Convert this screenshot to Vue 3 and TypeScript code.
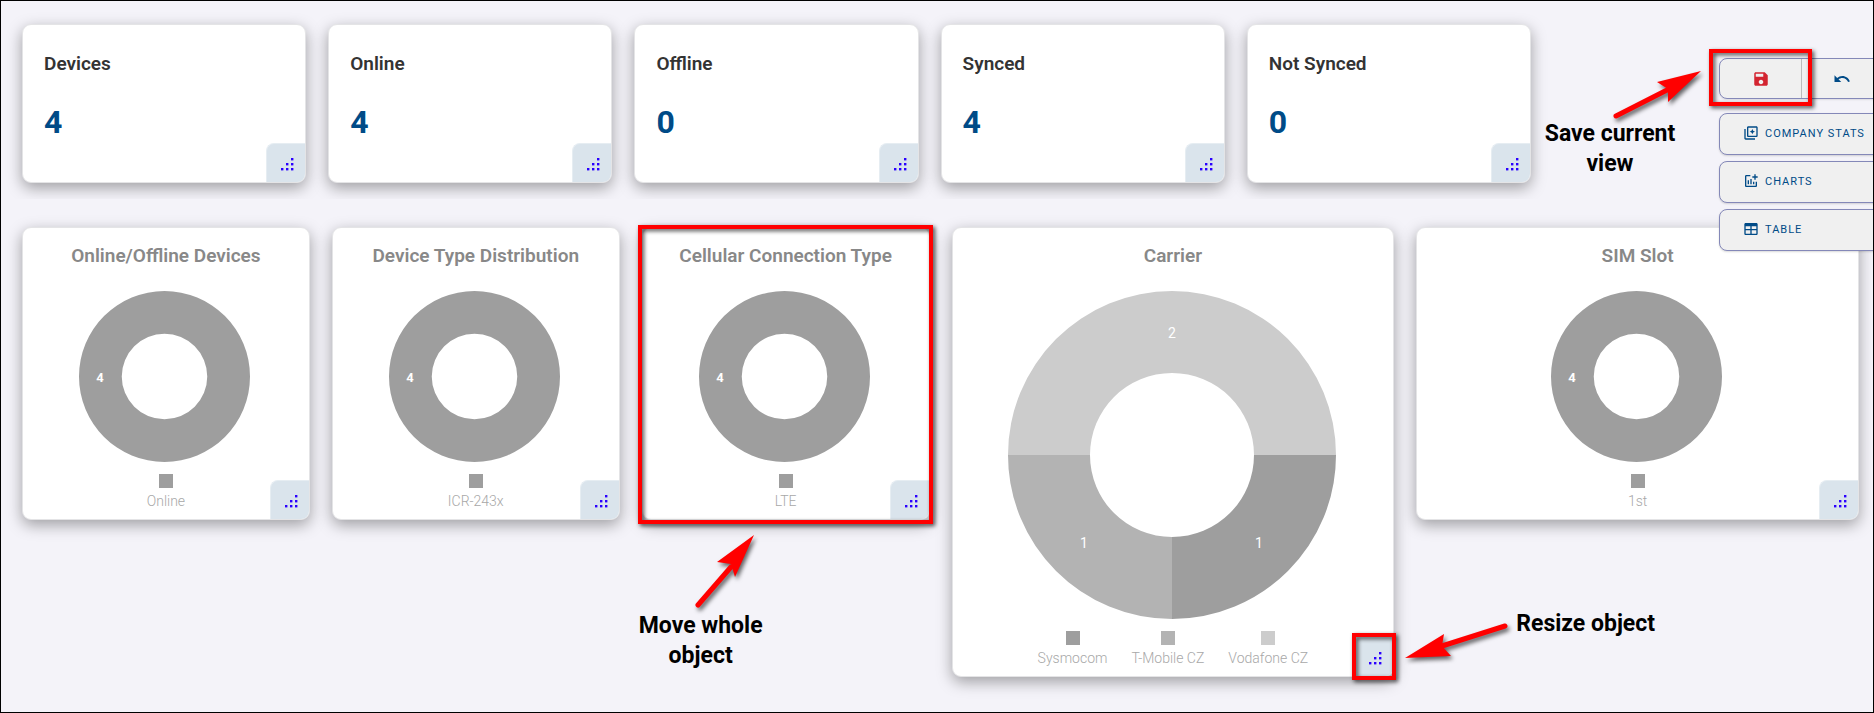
<script setup lang="ts">
interface Stat { label: string; value: number }
interface Slice { name: string; color: string; path: string }
interface SliceLabel { text: string; x: number; y: number }
interface Chart {
  title: string
  size: number
  slices: Slice[]
  labels: SliceLabel[]
  large?: boolean
  move?: boolean
}

const stats: Stat[] = [
  { label: 'Devices', value: 4 },
  { label: 'Online', value: 4 },
  { label: 'Offline', value: 0 },
  { label: 'Synced', value: 4 },
  { label: 'Not Synced', value: 0 },
]

// Ring segment between two angles in degrees, clockwise from three o'clock.
function ring(size: number, from: number, to: number): string {
  const c = size / 2
  const outer = c
  const inner = c / 2
  const at = (r: number, deg: number) => {
    const a = (deg * Math.PI) / 180
    return `${c + r * Math.cos(a)} ${c + r * Math.sin(a)}`
  }
  const mid = (from + to) / 2
  return [
    `M${at(outer, from)}`,
    `A${outer} ${outer} 0 0 1 ${at(outer, mid)}`,
    `A${outer} ${outer} 0 0 1 ${at(outer, to)}`,
    `L${at(inner, to)}`,
    `A${inner} ${inner} 0 0 0 ${at(inner, mid)}`,
    `A${inner} ${inner} 0 0 0 ${at(inner, from)}Z`,
  ].join('')
}

function single(title: string, name: string, move = false): Chart {
  return {
    title,
    size: 171,
    slices: [{ name, color: '#9e9e9e', path: ring(171, 0, 360) }],
    labels: [{ text: '4', x: 21, y: 91 }],
    move,
  }
}

const charts: Chart[] = [
  single('Online/Offline Devices', 'Online'),
  single('Device Type Distribution', 'ICR-243x'),
  single('Cellular Connection Type', 'LTE', true),
  {
    title: 'Carrier',
    size: 328,
    large: true,
    slices: [
      { name: 'Sysmocom', color: '#9e9e9e', path: ring(328, 0, 90) },
      { name: 'T-Mobile CZ', color: '#b3b3b3', path: ring(328, 90, 180) },
      { name: 'Vodafone CZ', color: '#cccccc', path: ring(328, 180, 360) },
    ],
    labels: [
      { text: '2', x: 164, y: 47 },
      { text: '1', x: 76, y: 257 },
      { text: '1', x: 251, y: 257 },
    ],
  },
  single('SIM Slot', '1st'),
]

const dots = [[10, 0], [5, 5], [10, 5], [0, 10], [5, 10], [10, 10]]
</script>

<template>
  <main class="page">
    <section class="stats">
      <article v-for="s in stats" :key="s.label" class="card stat">
        <h2 class="stat-label">{{ s.label }}</h2>
        <p class="stat-value">{{ s.value }}</p>
        <button class="handle" type="button" aria-label="Resize">
          <svg width="13" height="13" viewBox="0 0 13 13" aria-hidden="true">
            <rect v-for="([x, y], i) in dots" :key="i" :x="x" :y="y" width="2.400" height="2.400" />
          </svg>
        </button>
      </article>
    </section>

    <section class="charts">
      <article v-for="c in charts" :key="c.title" class="card chart" :class="{ large: c.large }">
        <h2 class="chart-title">{{ c.title }}</h2>
        <svg class="donut" :width="c.size" :height="c.size" :viewBox="`0 0 ${c.size} ${c.size}`">
          <path v-for="s in c.slices" :key="s.name" :d="s.path" :fill="s.color" />
          <text v-for="(l, i) in c.labels" :key="i" :x="l.x" :y="l.y" class="slice-label">{{ l.text }}</text>
        </svg>
        <ul class="legend">
          <li v-for="s in c.slices" :key="s.name">
            <span class="swatch" :style="{ background: s.color }"></span>{{ s.name }}
          </li>
        </ul>
        <button class="handle" type="button" aria-label="Resize">
          <svg width="13" height="13" viewBox="0 0 13 13" aria-hidden="true">
            <rect v-for="([x, y], i) in dots" :key="i" :x="x" :y="y" width="2.400" height="2.400" />
          </svg>
        </button>

        <template v-if="c.move">
          <span class="frame frame-move"></span>
          <div class="note note-move">
            <svg class="arrow" width="70" height="84" viewBox="0 0 70 84" aria-hidden="true">
              <path class="shaft" d="M5 78 38 40" />
              <path d="M61 8 24 35 38 37 42 50Z" />
            </svg>
            <p>Move whole<br />object</p>
          </div>
        </template>
        <template v-if="c.large">
          <span class="frame frame-resize"></span>
          <div class="note note-resize">
            <svg class="arrow" width="112" height="44" viewBox="0 0 112 44" aria-hidden="true">
              <path class="shaft" d="M105 7 42 27" />
              <path d="M5 39 44 15 42 27 51 37Z" />
            </svg>
            <p>Resize object</p>
          </div>
        </template>
      </article>
    </section>

    <aside class="tools">
      <div class="split">
        <button type="button" class="save" aria-label="Save">
          <svg width="18" height="18" viewBox="0 0 24 24" aria-hidden="true">
            <path d="M17 3H5c-1.11 0-2 .9-2 2v14c0 1.1.89 2 2 2h14c1.1 0 2-.9 2-2V7l-4-4zm-5 16c-1.66 0-3-1.34-3-3s1.34-3 3-3 3 1.34 3 3-1.34 3-3 3zm3-10H5V5h10v4z" />
          </svg>
        </button>
        <button type="button" class="undo" aria-label="Undo">
          <svg width="18" height="18" viewBox="0 0 24 24" aria-hidden="true">
            <path d="M12.5 8c-2.65 0-5.05.99-6.9 2.6L2 7v9h9l-3.62-3.62c1.39-1.16 3.16-1.88 5.12-1.88 3.54 0 6.55 2.31 7.6 5.5l2.37-.78C21.08 11.03 17.15 8 12.5 8z" />
          </svg>
        </button>
      </div>
      <button type="button" class="tool">
        <svg width="16" height="16" viewBox="0 0 24 24" aria-hidden="true">
          <path d="M4 6H2v14c0 1.1.9 2 2 2h14v-2H4V6zm16-4H8c-1.1 0-2 .9-2 2v12c0 1.1.9 2 2 2h12c1.1 0 2-.9 2-2V4c0-1.1-.9-2-2-2zm0 14H8V4h12v12zM14 6l1.200 2.800L18 10l-2.800 1.200L14 14l-1.200-2.800L10 10l2.800-1.200z" />
        </svg>
        COMPANY STATS
      </button>
      <button type="button" class="tool">
        <svg width="16" height="16" viewBox="0 0 24 24" aria-hidden="true">
          <path d="M22 5v2h-3v3h-2V7h-3V5h3V2h2v3h3zm-3 14H5V5h6V3H5c-1.1 0-2 .9-2 2v14c0 1.1.9 2 2 2h14c1.1 0 2-.9 2-2v-6h-2v6zm-4-6v4h2v-4h-2zm-4 4h2V9h-2v8zm-2 0v-6H7v6h2z" />
        </svg>
        CHARTS
      </button>
      <button type="button" class="tool">
        <svg width="16" height="16" viewBox="0 0 24 24" aria-hidden="true">
          <path d="M4 3h16c1.1 0 2 .9 2 2v14c0 1.1-.9 2-2 2H4c-1.1 0-2-.9-2-2V5c0-1.1.9-2 2-2zm0 5v4h7V8H4zm9 0v4h7V8h-7zm-9 6v5h7v-5H4zm9 0v5h7v-5h-7z" />
        </svg>
        TABLE
      </button>
      <span class="frame frame-save"></span>
      <div class="note note-save">
        <svg class="arrow" width="96" height="54" viewBox="0 0 96 54" aria-hidden="true">
          <path class="shaft" d="M5 51 60 23" />
          <path d="M90 6 46 17 57 24 57 37Z" />
        </svg>
        <p>Save current<br />view</p>
      </div>
    </aside>
  </main>
</template>

<style>
body {
  margin: 0;
}
</style>

<style scoped>
.page {
  position: relative;
  box-sizing: border-box;
  min-height: 100vh;
  border: 1px solid #000;
  overflow: hidden;
  background: #f4f3f9;
  font-family: Roboto, "Liberation Sans", sans-serif;
}
h2,
p,
ul {
  margin: 0;
  padding: 0;
}
button {
  margin: 0;
  padding: 0;
  font-family: inherit;
  cursor: pointer;
}
.stats {
  display: grid;
  grid-template-columns: repeat(5, 1fr);
  gap: 22px;
  padding: 23px 342px 16px 21px;
  overflow: hidden;
}
.charts {
  display: grid;
  grid-template-columns: 288fr 288fr 288fr 443fr 443fr;
  align-items: start;
  gap: 22px;
  padding: 28px 14px 33px 21px;
}
.card {
  position: relative;
  box-sizing: border-box;
  border: 1px solid #e4e4e6;
  border-radius: 9px;
  background: #fff;
  box-shadow: 0 5px 15px rgba(0, 0, 0, 0.35);
}
.stat {
  height: 159px;
  padding: 27px 21px 0;
}
.stat-label {
  color: #333;
  font-size: 19px;
  font-weight: 600;
  line-height: 24px;
}
.stat-value {
  margin-top: 28px;
  color: #004b87;
  font-size: 32px;
  font-weight: 700;
  line-height: 36px;
}
.handle {
  position: absolute;
  right: 0;
  bottom: 0;
  display: flex;
  align-items: flex-end;
  justify-content: flex-end;
  box-sizing: border-box;
  width: 39px;
  height: 39px;
  padding: 0 11px 11px 0;
  border: 0 solid #e6edf2;
  border-width: 1px 0 0 1px;
  border-radius: 8px 0;
  background: #dae4ec;
}
.handle svg {
  fill: #2a00ff;
}
.chart {
  display: flex;
  flex-direction: column;
  align-items: center;
  padding: 16px 8px 9px;
}
.chart-title {
  margin-bottom: 23px;
  color: #888;
  font-size: 19px;
  font-weight: 600;
  line-height: 24px;
}
.donut {
  display: block;
  margin-right: 2px;
}
.slice-label {
  fill: #fff;
  font-size: 13px;
  font-weight: 700;
  text-anchor: middle;
}
.large .slice-label {
  font-size: 14px;
  font-weight: 400;
}
.legend {
  display: flex;
  gap: 24px;
  margin-top: 12px;
  color: #a8a8a8;
  font-size: 14px;
  font-weight: 300;
  line-height: 18px;
  list-style: none;
}
.legend li {
  display: flex;
  flex-direction: column;
  align-items: center;
  gap: 4px;
}
.swatch {
  width: 14px;
  height: 14px;
}
.tools {
  position: absolute;
  top: 57px;
  right: -20px;
  display: flex;
  flex-direction: column;
  gap: 6px;
  width: 174px;
}
.split {
  display: flex;
  box-sizing: border-box;
  height: 41px;
  margin-bottom: 8px;
  border: 1px solid #8488b8;
  border-radius: 8px;
  background: #f0f0f0;
  box-shadow: 0 1px 2px rgba(0, 0, 0, 0.1);
}
.split button {
  display: flex;
  align-items: center;
  justify-content: center;
  border: 0;
  background: none;
}
.split .save {
  width: 82px;
  border-right: 1px solid #bbb;
}
.save svg {
  fill: #d32430;
}
.undo {
  width: 80px;
}
.undo svg {
  fill: #004b87;
}
.tool {
  display: flex;
  align-items: center;
  gap: 6px;
  box-sizing: border-box;
  height: 42px;
  padding: 0 0 2px 23px;
  border: 1px solid #8488b8;
  border-radius: 8px;
  background: #f0f0f0;
  box-shadow: 0 1px 2px rgba(0, 0, 0, 0.15);
  color: #004b87;
  font-size: 11px;
  letter-spacing: 1px;
  white-space: nowrap;
}
.tool svg {
  fill: #004b87;
}
.frame {
  position: absolute;
  box-sizing: border-box;
  border: 4px solid #f00;
  filter: drop-shadow(2px 2px 2px rgba(0, 0, 0, 0.7));
  pointer-events: none;
}
.frame-move {
  inset: -3px -4px -5px -5px;
}
.frame-resize {
  right: -3px;
  bottom: -4px;
  width: 44px;
  height: 47px;
}
.frame-save {
  top: -9px;
  left: -10px;
  width: 103px;
  height: 57px;
}
.note {
  position: absolute;
  color: #000;
  font-size: 23px;
  font-weight: 700;
  line-height: 30px;
  text-align: center;
  white-space: nowrap;
}
.arrow {
  display: block;
  fill: #f00;
  filter: drop-shadow(2px 3px 2px rgba(0, 0, 0, 0.6));
}
.shaft {
  stroke: #f00;
  stroke-width: 5px;
  stroke-linecap: round;
}
.note-move {
  top: calc(100% + 8px);
  left: -4px;
}
.note-move .arrow {
  margin-left: 54px;
}
.note-resize {
  bottom: 13px;
  left: calc(100% + 7px);
  display: flex;
  align-items: flex-start;
  gap: 4px;
}
.note-resize .arrow {
  margin-top: 10px;
}
.note-save {
  top: 7px;
  right: calc(100% + 29px);
  width: 160px;
}
.note-save .arrow {
  margin-left: 81px;
}
</style>
